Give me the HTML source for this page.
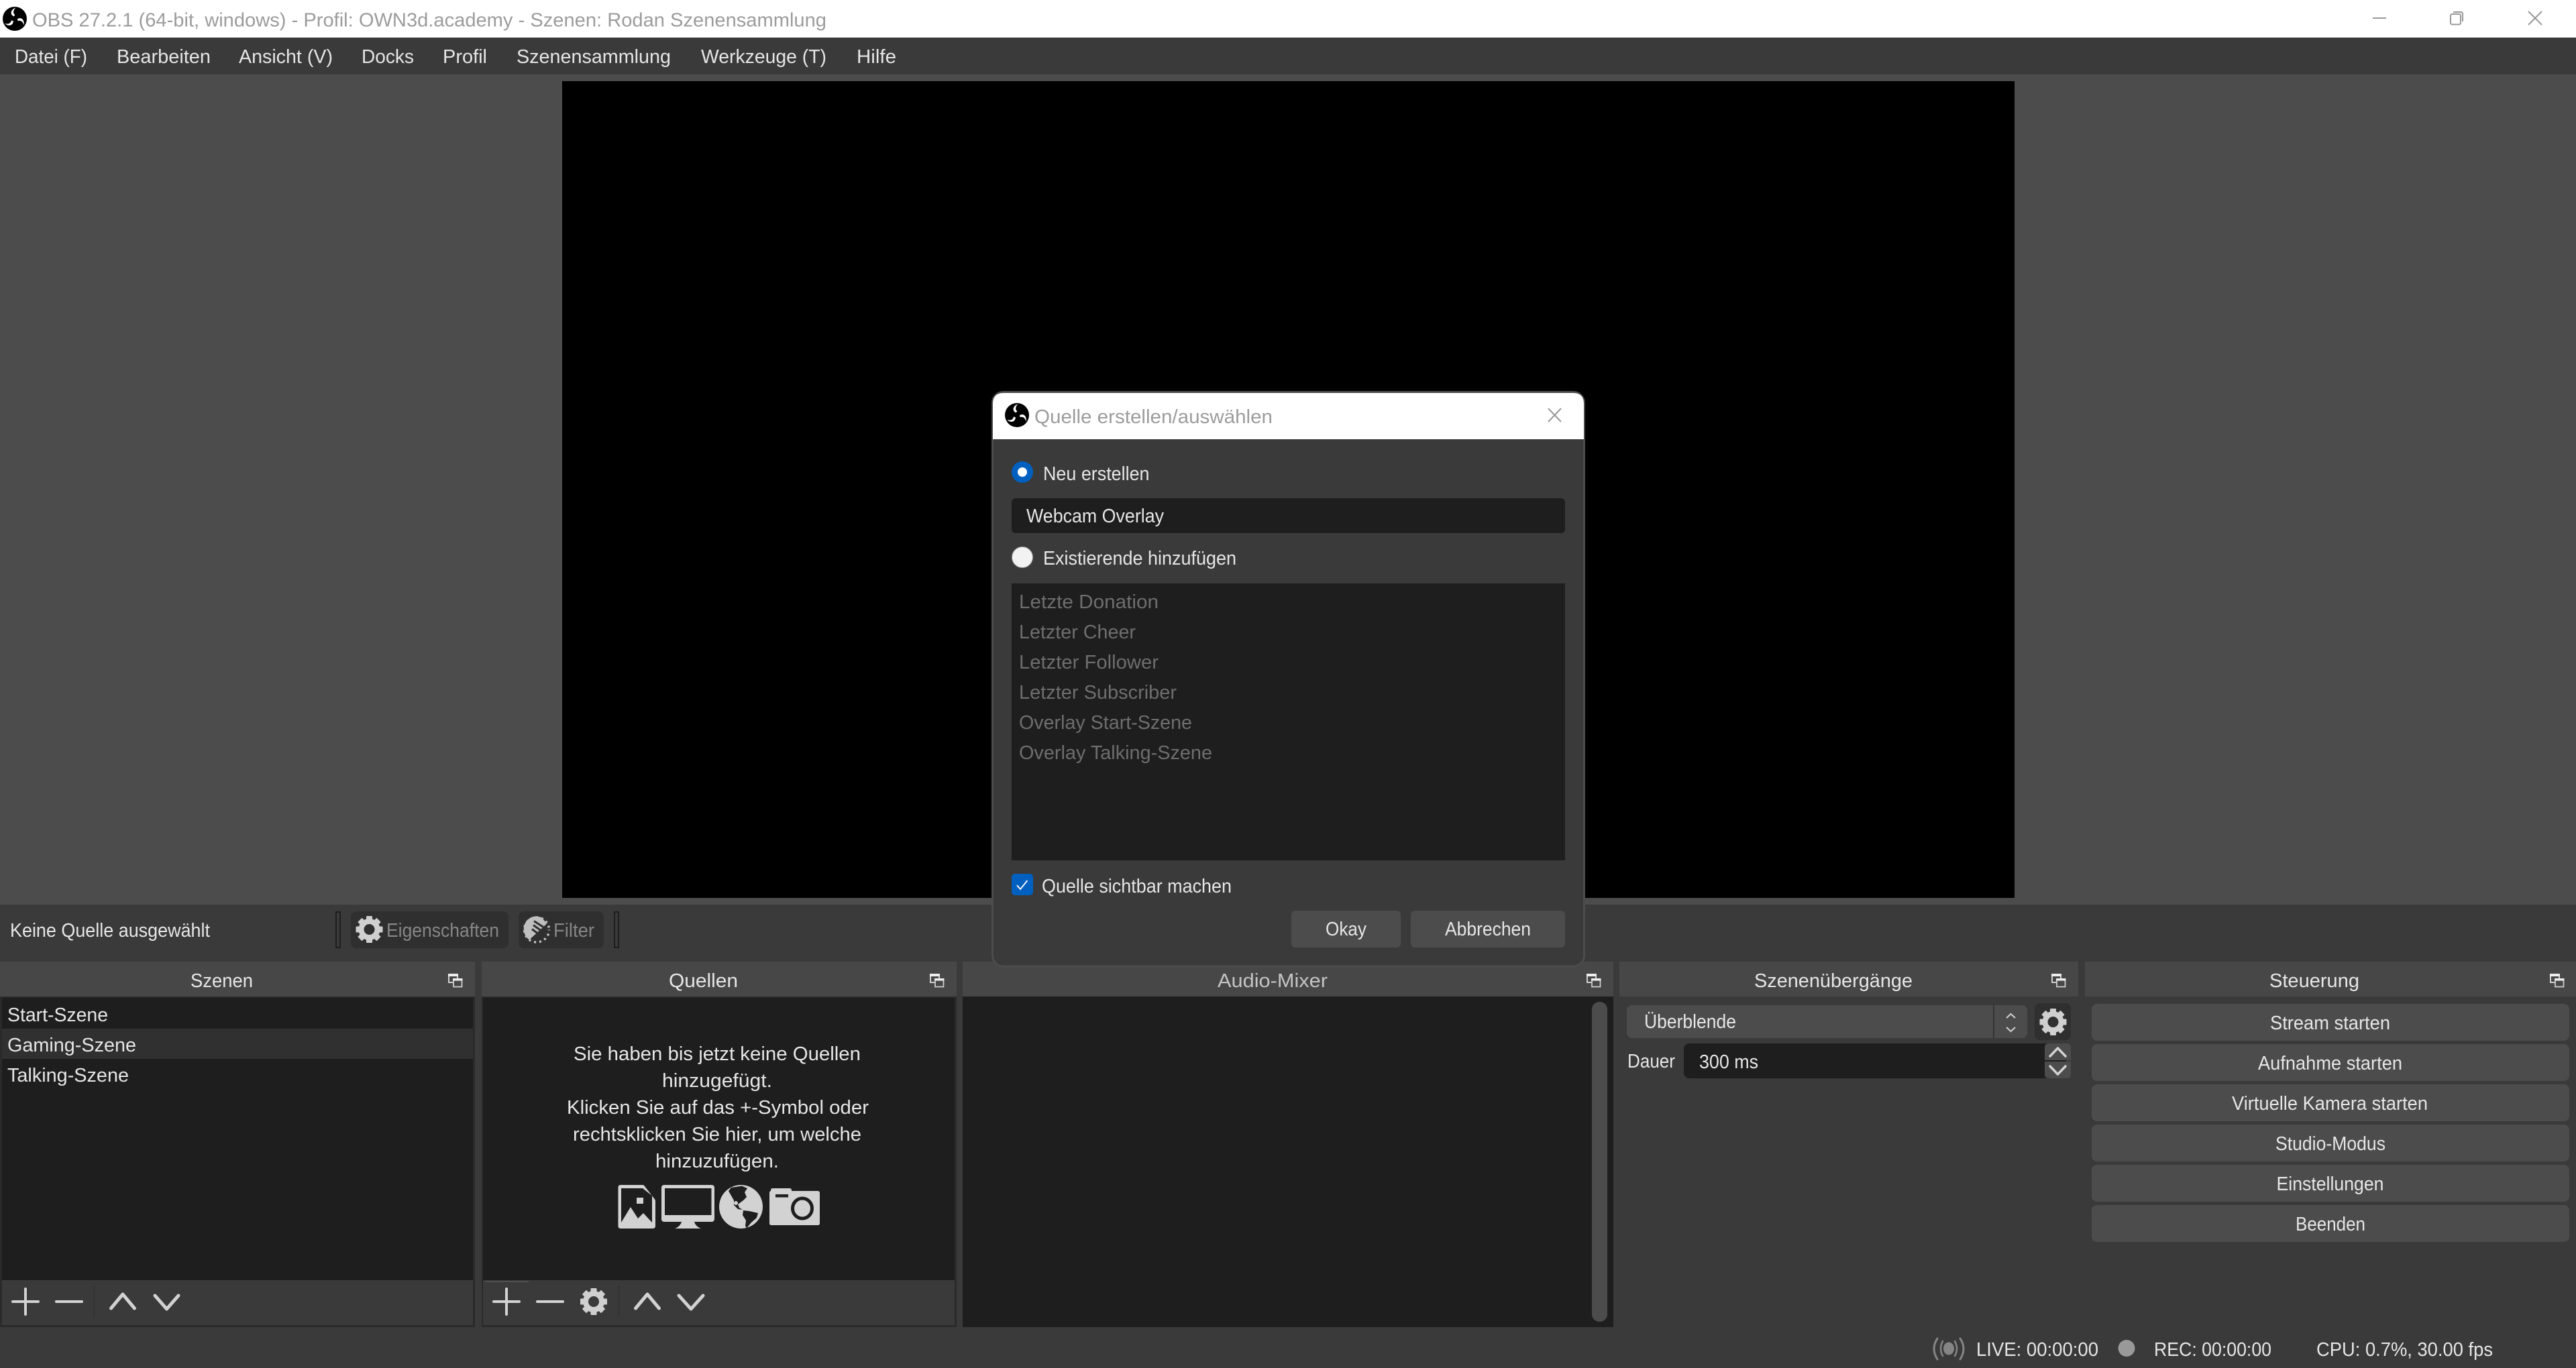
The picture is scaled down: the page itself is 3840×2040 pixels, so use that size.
<!DOCTYPE html>
<html lang="de">
<head>
<meta charset="utf-8">
<title>OBS 27.2.1</title>
<style>
html,body{margin:0;padding:0;background:#3a3a3a;width:3840px;height:2040px;overflow:hidden}
svg{display:block}
text{font-family:"Liberation Sans",sans-serif;font-size:29px;fill:#e6e6e6}
.g{fill:#9c9c9c}
.d{fill:#6e6e6e}
.m{fill:#868686}
.ic{stroke:#d2d2d2;fill:none;stroke-linecap:round;stroke-linejoin:round}
</style>
</head>
<body>
<svg xmlns="http://www.w3.org/2000/svg" width="3840" height="2040" viewBox="0 0 3840 2040">
<defs>
<g id="gear" fill="#cfcfcf">
<circle r="12" fill="none" stroke="#cfcfcf" stroke-width="8"/>
<g id="teeth"><rect x="-4.5" y="-20" width="9" height="8" rx="1"/><rect x="-4.5" y="12" width="9" height="8" rx="1"/><rect x="-20" y="-4.5" width="8" height="9" rx="1"/><rect x="12" y="-4.5" width="8" height="9" rx="1"/></g>
<use href="#teeth" transform="rotate(45)"/>
</g>
<g id="float">
<rect x="1" y="1" width="13" height="12" fill="#474747" stroke="#ddd" stroke-width="1.8"/>
<rect x="0" y="0" width="15" height="4" fill="#eee"/>
<rect x="8" y="8" width="12.5" height="11.5" fill="#474747" stroke="#ccc" stroke-width="1.8"/>
<rect x="7" y="7" width="14.500" height="3.500" fill="#eee"/>
</g>
<g id="logo">
<circle r="18" fill="#000"/>
<g id="blade" fill="#fff"><path d="M-1.500,-3.500C-7.500,-6.500 -6.500,-13.500 1.500,-16.500C-2.500,-12.500 -3,-8.500 0.500,-5.500C-0.200,-5 -1,-4.300 -1.500,-3.500Z"/></g>
<use href="#blade" transform="rotate(120)"/>
<use href="#blade" transform="rotate(240)"/>
</g>
<g id="tools">
<path class="ic" stroke-width="4" d="M20,-19V19M1,0H39"/>
<path class="ic" stroke-width="4" d="M66,0H104"/>
</g>
</defs>

<!-- main bg -->
<rect width="3840" height="2040" fill="#3a3a3a"/>
<rect y="111" width="3840" height="1238" fill="#4c4c4c"/>
<rect x="838" y="121" width="2165" height="1218" fill="#000"/>

<!-- titlebar -->
<rect width="3840" height="56" fill="#fff"/>
<use href="#logo" transform="translate(22,28)"/>
<text class="g" x="48" y="39.500" textLength="1184" lengthAdjust="spacingAndGlyphs">OBS 27.2.1 (64-bit, windows) - Profil: OWN3d.academy - Szenen: Rodan Szenensammlung</text>
<path d="M3537,27H3557" stroke="#999" stroke-width="2" fill="none"/>
<rect x="3653" y="21" width="15" height="15.500" rx="2.500" fill="none" stroke="#999" stroke-width="2"/>
<path d="M3657,18H3668Q3671,18 3671,21V32" fill="none" stroke="#999" stroke-width="2"/>
<path d="M3769,17L3789,37M3789,17L3769,37" stroke="#999" stroke-width="2" fill="none"/>

<!-- menu -->
<text x="22" y="94" textLength="108" lengthAdjust="spacingAndGlyphs">Datei (F)</text>
<text x="174" y="94" textLength="140" lengthAdjust="spacingAndGlyphs">Bearbeiten</text>
<text x="356" y="94" textLength="140" lengthAdjust="spacingAndGlyphs">Ansicht (V)</text>
<text x="539" y="94" textLength="78" lengthAdjust="spacingAndGlyphs">Docks</text>
<text x="660" y="94" textLength="66" lengthAdjust="spacingAndGlyphs">Profil</text>
<text x="770" y="94" textLength="230" lengthAdjust="spacingAndGlyphs">Szenensammlung</text>
<text x="1045" y="94" textLength="187" lengthAdjust="spacingAndGlyphs">Werkzeuge (T)</text>
<text x="1277" y="94" textLength="59" lengthAdjust="spacingAndGlyphs">Hilfe</text>

<!-- source toolbar -->
<text x="15" y="1397" textLength="298" lengthAdjust="spacingAndGlyphs">Keine Quelle ausgewählt</text>
<rect x="501" y="1360" width="6" height="53" fill="#3a3a3a" stroke="#1e1e1e" stroke-width="2"/>
<rect x="523" y="1359" width="235" height="55" rx="8" fill="#2f2f2f"/>
<use href="#gear" transform="translate(550.500,1386)"/>
<text class="m" x="576" y="1397" textLength="168" lengthAdjust="spacingAndGlyphs">Eigenschaften</text>
<rect x="773" y="1359" width="127" height="55" rx="8" fill="#2f2f2f"/>
<g transform="translate(800,1386.500)">
<path d="M-3,-20A19,19 0 0 1 9,-17L15,-9L-11,15A19,19 0 0 1 -19,2A19,19 0 0 1 -3,-20Z" fill="#bfbfbf"/>
<path d="M-4,-13L10,-4M-5,-7L9,3M-7,-1L5,8" stroke="#2f2f2f" stroke-width="3" fill="none"/>
<circle r="18.500" fill="none" stroke="#bfbfbf" stroke-width="3.500" stroke-dasharray="3 5" stroke-dashoffset="2"/>
</g>
<text class="m" x="825" y="1397" textLength="61" lengthAdjust="spacingAndGlyphs">Filter</text>
<rect x="916" y="1360" width="6" height="53" fill="#3a3a3a" stroke="#1e1e1e" stroke-width="2"/>

<!-- Szenen dock -->
<rect x="0" y="1434" width="708" height="52" fill="#474747"/>
<text x="284" y="1472" textLength="93" lengthAdjust="spacingAndGlyphs">Szenen</text>
<use href="#float" transform="translate(668,1452)"/>
<rect x="0" y="1486" width="708" height="493" fill="#2a2a2a"/>
<rect x="3" y="1488" width="702" height="421" fill="#1e1e1e"/>
<rect x="3" y="1534" width="702" height="45" fill="#303030"/>
<text x="11" y="1523" textLength="150" lengthAdjust="spacingAndGlyphs">Start-Szene</text>
<text x="11" y="1568" textLength="192" lengthAdjust="spacingAndGlyphs">Gaming-Szene</text>
<text x="11" y="1613" textLength="181" lengthAdjust="spacingAndGlyphs">Talking-Szene</text>
<rect x="3" y="1909" width="702" height="67" fill="#3a3a3a"/>
<use href="#tools" transform="translate(18,1941)"/>
<path d="M140,1917V1965" stroke="#333" stroke-width="2"/>
<path class="ic" stroke-width="5" d="M165.500,1951L183,1930L200.500,1951"/>
<path class="ic" stroke-width="5" d="M231,1932L248.500,1952L266,1932"/>

<!-- Quellen dock -->
<rect x="718" y="1434" width="708" height="52" fill="#474747"/>
<text x="997" y="1472" textLength="103" lengthAdjust="spacingAndGlyphs">Quellen</text>
<use href="#float" transform="translate(1386,1452)"/>
<rect x="718" y="1486" width="708" height="493" fill="#2a2a2a"/>
<rect x="720" y="1488" width="703" height="421" fill="#1e1e1e"/>
<rect x="720" y="1909" width="703" height="67" fill="#3a3a3a"/>
<path d="M723,1911H788" stroke="#666" stroke-width="1"/>
<text x="855" y="1581" textLength="428" lengthAdjust="spacingAndGlyphs">Sie haben bis jetzt keine Quellen</text>
<text x="987" y="1621" textLength="164" lengthAdjust="spacingAndGlyphs">hinzugefügt.</text>
<text x="845" y="1661" textLength="450" lengthAdjust="spacingAndGlyphs">Klicken Sie auf das +-Symbol oder</text>
<text x="854" y="1701" textLength="430" lengthAdjust="spacingAndGlyphs">rechtsklicken Sie hier, um welche</text>
<text x="977" y="1741" textLength="184" lengthAdjust="spacingAndGlyphs">hinzuzufügen.</text>

<!-- big icons -->
<path d="M925,1767H958Q960,1767 961,1769L975,1787Q977,1789 977,1792V1828Q977,1832 973,1832H925Q921.500,1832 921.500,1828V1771Q921.500,1767 925,1767Z" fill="#d2d2d2"/>
<path d="M926,1772H958L972,1783V1823L959,1809L951,1817L940,1800L926,1823Z" fill="#1e1e1e"/>
<rect x="949" y="1786" width="10" height="9" fill="#d2d2d2"/>
<rect x="986" y="1767" width="79" height="55" rx="4" fill="#d2d2d2"/>
<rect x="991" y="1772" width="69.500" height="40" fill="#1e1e1e"/>
<path d="M1016,1822H1035Q1037,1829 1045,1832H1006Q1014,1829 1016,1822Z" fill="#d2d2d2"/>
<circle cx="1104.500" cy="1799.500" r="32.500" fill="#d2d2d2"/>
<path d="M1090,1771L1106,1768.500L1114,1772L1110,1778L1113,1785L1108,1790L1104,1793L1100,1796L1102,1801L1107,1804L1100,1803L1094,1797L1094,1790L1090,1783L1086,1776Z" fill="#1e1e1e"/>
<path d="M1108,1805L1117,1806L1130,1809L1128,1816L1120,1823L1113,1831.500L1111,1828L1112,1820L1107,1812Z" fill="#1e1e1e"/>
<circle cx="1097" cy="1794" r="3" fill="#d2d2d2"/>
<path d="M1149,1776V1775Q1149,1772 1152,1772H1177Q1180,1772 1180,1775V1776H1219Q1222,1776 1222,1779V1824Q1222,1827 1219,1827H1150Q1147,1827 1147,1824V1779Q1147,1776 1149,1776Z" fill="#d2d2d2"/>
<rect x="1156" y="1781" width="19" height="4.500" fill="#1e1e1e"/>
<ellipse cx="1196" cy="1802" rx="14.500" ry="15" fill="#d2d2d2" stroke="#1e1e1e" stroke-width="5"/>

<use href="#tools" transform="translate(735,1941)"/>
<use href="#gear" transform="translate(885,1941)"/>
<path d="M922.500,1917V1965" stroke="#333" stroke-width="2"/>
<path class="ic" stroke-width="5" d="M947.500,1951L965,1930L982.500,1951"/>
<path class="ic" stroke-width="5" d="M1012,1932L1030,1952L1048,1932"/>

<!-- Audio mixer -->
<rect x="1435" y="1434" width="970" height="52" fill="#474747"/>
<text x="1815" y="1472" textLength="164" lengthAdjust="spacingAndGlyphs" style="fill:#c4c4c4">Audio-Mixer</text>
<use href="#float" transform="translate(2365,1452)"/>
<rect x="1435" y="1486" width="970" height="493" fill="#1e1e1e"/>
<rect x="2373" y="1494" width="23" height="477" rx="11" fill="#4c4c4c"/>

<!-- Transitions -->
<rect x="2414" y="1434" width="684" height="52" fill="#474747"/>
<text x="2615" y="1472" textLength="236" lengthAdjust="spacingAndGlyphs">Szenenübergänge</text>
<use href="#float" transform="translate(3058,1452)"/>
<rect x="2425" y="1499" width="597" height="49" rx="8" fill="#4c4c4c"/>
<path d="M2972,1499V1548" stroke="#333" stroke-width="2"/>
<path d="M2991,1518L2997.500,1512L3004,1518M2991,1532L2997.500,1538L3004,1532" stroke="#d2d2d2" stroke-width="2" fill="none"/>
<text x="2451" y="1533" textLength="137" lengthAdjust="spacingAndGlyphs">Überblende</text>
<rect x="3033" y="1496" width="54" height="55" rx="8" fill="#2f2f2f"/>
<use href="#gear" transform="translate(3060.500,1524)"/>
<text x="2426" y="1592" textLength="71" lengthAdjust="spacingAndGlyphs">Dauer</text>
<rect x="2510" y="1556" width="570" height="52" rx="8" fill="#1e1e1e"/>
<text x="2533" y="1593" textLength="88" lengthAdjust="spacingAndGlyphs">300 ms</text>
<path d="M3048,1581V1562Q3048,1556 3054,1556H3081Q3087,1556 3087,1562V1581Z" fill="#4c4c4c"/>
<path d="M3048,1583V1602Q3048,1608 3054,1608H3081Q3087,1608 3087,1602V1583Z" fill="#4c4c4c"/>
<path class="ic" stroke-width="3.500" d="M3056,1575L3067.500,1563L3079,1575M3056,1590L3067.500,1602L3079,1590"/>

<!-- Controls -->
<rect x="3108" y="1434" width="732" height="52" fill="#474747"/>
<text x="3383" y="1472" textLength="134" lengthAdjust="spacingAndGlyphs">Steuerung</text>
<use href="#float" transform="translate(3801,1452)"/>
<rect x="3118" y="1497" width="712" height="55" rx="8" fill="#4c4c4c"/>
<rect x="3118" y="1557" width="712" height="55" rx="8" fill="#4c4c4c"/>
<rect x="3118" y="1617" width="712" height="55" rx="8" fill="#4c4c4c"/>
<rect x="3118" y="1677" width="712" height="55" rx="8" fill="#4c4c4c"/>
<rect x="3118" y="1737" width="712" height="55" rx="8" fill="#4c4c4c"/>
<rect x="3118" y="1797" width="712" height="55" rx="8" fill="#4c4c4c"/>
<text x="3384" y="1535" textLength="179" lengthAdjust="spacingAndGlyphs">Stream starten</text>
<text x="3366" y="1595" textLength="215" lengthAdjust="spacingAndGlyphs">Aufnahme starten</text>
<text x="3327" y="1655" textLength="292" lengthAdjust="spacingAndGlyphs">Virtuelle Kamera starten</text>
<text x="3392" y="1715" textLength="164" lengthAdjust="spacingAndGlyphs">Studio-Modus</text>
<text x="3393.500" y="1775" textLength="160" lengthAdjust="spacingAndGlyphs">Einstellungen</text>
<text x="3422" y="1835" textLength="104" lengthAdjust="spacingAndGlyphs">Beenden</text>

<!-- status bar -->
<g fill="none" stroke="#858585" stroke-linecap="round">
<path d="M2896,2000Q2890,2011 2896,2022M2914,2000Q2920,2011 2914,2022" stroke-width="2.500"/>
<path d="M2888,1996Q2878,2011 2888,2027M2922,1996Q2932,2011 2922,2027" stroke-width="3"/>
</g>
<ellipse cx="2905" cy="2011" rx="8" ry="9.500" fill="#858585"/>
<text x="2946" y="2022" textLength="182" lengthAdjust="spacingAndGlyphs">LIVE: 00:00:00</text>
<circle cx="3170" cy="2010.500" r="12.500" fill="#999"/>
<text x="3211" y="2022" textLength="175" lengthAdjust="spacingAndGlyphs">REC: 00:00:00</text>
<text x="3453" y="2022" textLength="263" lengthAdjust="spacingAndGlyphs">CPU: 0.7%, 30.00 fps</text>

<!-- dialog -->
<rect x="1479.500" y="584.500" width="882" height="856.500" rx="16" fill="#3a3a3a" stroke="#4c4c4c" stroke-width="3"/>
<path d="M1480,655V602Q1480,586 1496,586H2345Q2361,586 2361,602V655Z" fill="#fff"/>
<use href="#logo" transform="translate(1516,619)"/>
<text class="g" x="1542" y="631" textLength="355" lengthAdjust="spacingAndGlyphs">Quelle erstellen/auswählen</text>
<path d="M2308,609L2327,629M2327,609L2308,629" stroke="#999" stroke-width="2" fill="none"/>
<circle cx="1524" cy="704" r="16" fill="#0060c0"/>
<circle cx="1524" cy="704" r="7" fill="#fff"/>
<text x="1555" y="716" textLength="158.500" lengthAdjust="spacingAndGlyphs">Neu erstellen</text>
<rect x="1508" y="743" width="825" height="52" rx="6" fill="#1e1e1e"/>
<text x="1530" y="779" textLength="205" lengthAdjust="spacingAndGlyphs">Webcam Overlay</text>
<circle cx="1524" cy="831" r="15.500" fill="#f2f2f2" stroke="#999" stroke-width="1"/>
<text x="1555" y="842" textLength="288" lengthAdjust="spacingAndGlyphs">Existierende hinzufügen</text>
<rect x="1508" y="870" width="825" height="413" fill="#1e1e1e"/>
<text class="d" x="1519" y="907" textLength="208" lengthAdjust="spacingAndGlyphs">Letzte Donation</text>
<text class="d" x="1519" y="952" textLength="174" lengthAdjust="spacingAndGlyphs">Letzter Cheer</text>
<text class="d" x="1519" y="997" textLength="208" lengthAdjust="spacingAndGlyphs">Letzter Follower</text>
<text class="d" x="1519" y="1042" textLength="235" lengthAdjust="spacingAndGlyphs">Letzter Subscriber</text>
<text class="d" x="1519" y="1087" textLength="258" lengthAdjust="spacingAndGlyphs">Overlay Start-Szene</text>
<text class="d" x="1519" y="1132" textLength="288" lengthAdjust="spacingAndGlyphs">Overlay Talking-Szene</text>
<rect x="1508" y="1303" width="32" height="32" rx="5" fill="#0060c0"/>
<path d="M1516,1320L1521,1326L1531.500,1313" stroke="#fff" stroke-width="1.800" fill="none"/>
<text x="1553" y="1331" textLength="283" lengthAdjust="spacingAndGlyphs">Quelle sichtbar machen</text>
<rect x="1925" y="1358" width="163" height="55" rx="6" fill="#4c4c4c"/>
<text x="1976" y="1395" textLength="61" lengthAdjust="spacingAndGlyphs">Okay</text>
<rect x="2103" y="1358" width="230" height="55" rx="6" fill="#4c4c4c"/>
<text x="2154" y="1395" textLength="128" lengthAdjust="spacingAndGlyphs">Abbrechen</text>
</svg>
</body>
</html>
